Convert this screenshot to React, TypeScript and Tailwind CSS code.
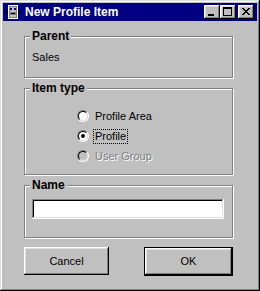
import React from "react";

const raised =
  "shadow-[inset_-1px_-1px_#000,inset_1px_1px_#fff,inset_-2px_-2px_#808080,inset_2px_2px_#dfdfdf]";

function Radio({ checked, disabled }: { checked?: boolean; disabled?: boolean }) {
  return (
    <div className="w-[12px] h-[12px] rounded-full border border-t-[#808080] border-l-[#808080] border-r-white border-b-white flex">
      <div
        className={
          "flex-1 rounded-full border border-t-black border-l-black border-r-[#dfdfdf] border-b-[#dfdfdf] flex items-center justify-center " +
          (disabled ? "bg-[#c0c0c0]" : "bg-white")
        }
      >
        {checked && <div className="w-[4px] h-[4px] rounded-full bg-black" />}
      </div>
    </div>
  );
}

function GroupBox({
  title,
  className,
  children,
}: {
  title: string;
  className?: string;
  children?: React.ReactNode;
}) {
  return (
    <div
      className={
        "relative w-[209px] border border-[#808080] shadow-[1px_1px_0_#fff,inset_1px_1px_0_#fff] " +
        (className || "")
      }
    >
      <span className="absolute left-[5px] top-[-8px] bg-[#c0c0c0] px-[2px] text-[12px] leading-[14px] font-bold text-black">
        {title}
      </span>
      {children}
    </div>
  );
}

function TitleIcon() {
  return (
    <svg width="16" height="16" viewBox="0 0 16 16" shapeRendering="crispEdges">
      <rect x="3" y="1" width="10" height="14" fill="#fff" />
      <rect x="4" y="2" width="8" height="12" fill="#808080" />
      <rect x="5" y="3" width="6" height="5" fill="#c0c0c0" />
      <rect x="5" y="4" width="2" height="2" fill="#000080" />
      <rect x="9" y="4" width="2" height="2" fill="#000080" />
      <rect x="6" y="9" width="4" height="1" fill="#000" />
      <rect x="5" y="11" width="6" height="2" fill="#c0c0c0" />
      <rect x="0" y="7" width="3" height="1" fill="#000" />
      <rect x="1" y="6" width="1" height="3" fill="#000" />
      <rect x="13" y="7" width="3" height="1" fill="#000" />
      <rect x="14" y="6" width="1" height="3" fill="#000" />
    </svg>
  );
}

function CapButton({ kind }: { kind: "min" | "max" | "close" }) {
  return (
    <div className={"w-[16px] h-[14px] bg-[#c0c0c0] flex " + raised}>
      <svg width="16" height="14" viewBox="0 0 16 14" shapeRendering="crispEdges">
        {kind === "min" && <rect x="4" y="9" width="6" height="2" fill="#000" />}
        {kind === "max" && (
          <g fill="#000">
            <rect x="3" y="2" width="9" height="2" />
            <rect x="3" y="2" width="1" height="9" />
            <rect x="11" y="2" width="1" height="9" />
            <rect x="3" y="10" width="9" height="1" />
          </g>
        )}
        {kind === "close" && (
          <g fill="#000">
            <rect x="4" y="3" width="2" height="1" />
            <rect x="10" y="3" width="2" height="1" />
            <rect x="5" y="4" width="2" height="1" />
            <rect x="9" y="4" width="2" height="1" />
            <rect x="6" y="5" width="4" height="1" />
            <rect x="7" y="6" width="2" height="1" />
            <rect x="6" y="7" width="4" height="1" />
            <rect x="5" y="8" width="2" height="1" />
            <rect x="9" y="8" width="2" height="1" />
            <rect x="4" y="9" width="2" height="1" />
            <rect x="10" y="9" width="2" height="1" />
          </g>
        )}
      </svg>
    </div>
  );
}

export default function App() {
  return (
    <div
      className="w-[260px] h-[291px] bg-[#c0c0c0] p-[3px] flex flex-col text-black shadow-[inset_-1px_-1px_#000,inset_1px_1px_#dfdfdf,inset_-2px_-2px_#808080,inset_2px_2px_#fff]"
      style={{ fontFamily: '"Liberation Sans", Arial, sans-serif' }}
    >
      <div className="h-[18px] bg-[#000080] flex items-center pl-[2px] pr-[3px]">
        <TitleIcon />
        <span className="ml-[4px] text-white font-bold text-[12px] leading-[14px]">
          New Profile Item
        </span>
        <div className="ml-auto flex items-center">
          <CapButton kind="min" />
          <CapButton kind="max" />
          <div className="w-[2px]" />
          <CapButton kind="close" />
        </div>
      </div>

      <div className="flex flex-col pl-[21px] pt-[15px]">
        <GroupBox title="Parent" className="h-[42px]">
          <div className="pl-[7px] pt-[14px] text-[11px] leading-[13px]">Sales</div>
        </GroupBox>

        <GroupBox title="Item type" className="h-[87px] mt-[10px]">
          <div className="flex flex-col pl-[52px] pt-[17px] text-[11px] leading-[13px]">
            <div className="h-[20px] flex items-center">
              <Radio />
              <span className="ml-[4px] px-[1px] border border-transparent">Profile Area</span>
            </div>
            <div className="h-[20px] flex items-center">
              <Radio checked />
              <span className="ml-[4px] px-[1px] border border-dotted border-black">Profile</span>
            </div>
            <div className="h-[20px] flex items-center">
              <Radio disabled />
              <span className="ml-[4px] px-[1px] border border-transparent text-[#808080] [text-shadow:1px_1px_0_#fff]">
                User Group
              </span>
            </div>
          </div>
        </GroupBox>

        <GroupBox title="Name" className="h-[53px] mt-[10px]">
          <div className="ml-[7px] mt-[13px] w-[192px] h-[20px] bg-white shadow-[inset_-1px_-1px_#fff,inset_1px_1px_#808080,inset_-2px_-2px_#dfdfdf,inset_2px_2px_#000]" />
        </GroupBox>

        <div className="w-[209px] mt-[9px] flex justify-between text-[11px]">
          <div className={"w-[85px] h-[28px] flex items-center justify-center bg-[#c0c0c0] " + raised}>
            Cancel
          </div>
          <div className="w-[89px] h-[29px] border border-black flex">
            <div className={"flex-1 flex items-center justify-center bg-[#c0c0c0] " + raised}>OK</div>
          </div>
        </div>
      </div>
    </div>
  );
}
